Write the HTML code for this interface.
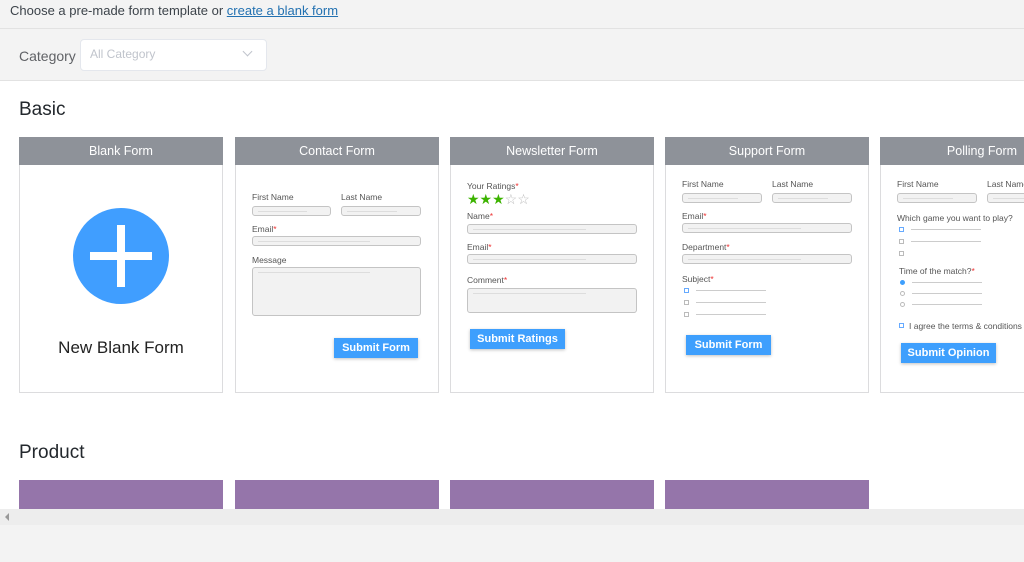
<!DOCTYPE html>
<html><head><meta charset="utf-8"><style>
*{margin:0;padding:0;box-sizing:border-box}
body{width:1024px;height:562px;overflow:hidden;background:#f3f3f3;font-family:"Liberation Sans",sans-serif;position:relative}
.a{position:absolute}
.card{position:absolute;top:137px;width:204px;height:256px;background:#fff;border:1px solid #dcdcde}
.hd{position:absolute;left:-1px;top:-1px;width:204px;height:28px;background:#8e9299;color:#fff;font-size:12.5px;text-align:center;line-height:29px}
.l{position:absolute;font-size:8.5px;color:#555;white-space:nowrap}
.l i{color:#e33;font-style:normal}
.in{position:absolute;height:10px;background:#f2f2f2;border:1px solid #c4c4c4;border-radius:3px}
.in:after{content:"";position:absolute;left:5px;right:30%;top:4px;height:1px;background:#ddd}
.btn{position:absolute;height:20px;background:#3e9ffd;color:#fff;font-weight:bold;font-size:11px;text-align:center;line-height:20px;box-shadow:0 1px 3px rgba(0,0,0,.25)}
.cb{position:absolute;width:5px;height:5px;border:1px solid #bbb}
.ln{position:absolute;height:1px;background:#ccc}
.pu{position:absolute;top:480px;width:204px;height:29px;background:#9575aa}
</style></head><body>
<div class="a" style="left:0;top:0;width:1024px;height:29px;background:#f3f3f3;border-bottom:1px solid #e2e2e2"></div>
<div class="a" style="left:10px;top:3px;font-size:13px;color:#3c434a">Choose a pre-made form template or <span style="color:#2271b1;text-decoration:underline">create a blank form</span></div>
<div class="a" style="left:0;top:80px;width:1024px;height:1px;background:#e2e2e2"></div>
<div class="a" style="left:19px;top:48px;font-size:14px;color:#606266">Category</div>
<div class="a" style="left:80px;top:39px;width:187px;height:32px;background:#fff;border:1px solid #e4e7ed;border-radius:4px"></div>
<div class="a" style="left:90px;top:47px;font-size:12px;color:#c0c4cc">All Category</div>
<div class="a" style="left:244px;top:48px;width:7px;height:7px;border-right:1px solid #c0c4cc;border-bottom:1px solid #c0c4cc;transform:rotate(45deg)"></div>
<div class="a" style="left:0;top:81px;width:1024px;height:428px;background:#fff"></div>
<div class="a" style="left:19px;top:99px;font-size:19px;color:#23282d">Basic</div>
<div class="a" style="left:19px;top:442px;font-size:19px;color:#23282d">Product</div>

<div class="card" style="left:19px"><div class="hd">Blank Form</div>
<div class="a" style="left:53px;top:70px;width:96px;height:96px;border-radius:50%;background:#409eff"></div>
<div class="a" style="left:70px;top:114px;width:62px;height:8px;background:#fff"></div>
<div class="a" style="left:97px;top:87px;width:8px;height:62px;background:#fff"></div>
<div class="a" style="left:0;width:202px;top:200px;text-align:center;font-size:17px;color:#222">New Blank Form</div>
</div>

<div class="card" style="left:235px"><div class="hd">Contact Form</div>
<div class="l" style="left:16px;top:54px">First Name</div><div class="l" style="left:105px;top:54px">Last Name</div>
<div class="in" style="left:16px;top:68px;width:79px"></div><div class="in" style="left:105px;top:68px;width:80px"></div>
<div class="l" style="left:16px;top:86px">Email<i>*</i></div>
<div class="in" style="left:16px;top:98px;width:169px"></div>
<div class="l" style="left:16px;top:117px">Message</div>
<div class="in" style="left:16px;top:129px;width:169px;height:49px"></div>
<div class="btn" style="left:98px;top:200px;width:84px">Submit Form</div>
</div>

<div class="card" style="left:450px"><div class="hd">Newsletter Form</div>
<div class="l" style="left:16px;top:43px">Your Ratings<i>*</i></div>
<div class="a" style="left:16px;top:53px;font-size:14px;color:#3cb300;letter-spacing:0px">★★★<span style="color:#bbb">☆☆</span></div>
<div class="l" style="left:16px;top:73px">Name<i>*</i></div>
<div class="in" style="left:16px;top:86px;width:170px"></div>
<div class="l" style="left:16px;top:104px">Email<i>*</i></div>
<div class="in" style="left:16px;top:116px;width:170px"></div>
<div class="l" style="left:16px;top:137px">Comment<i>*</i></div>
<div class="in" style="left:16px;top:150px;width:170px;height:25px"></div>
<div class="btn" style="left:19px;top:191px;width:95px">Submit Ratings</div>
</div>

<div class="card" style="left:665px"><div class="hd">Support Form</div>
<div class="l" style="left:16px;top:41px">First Name</div><div class="l" style="left:106px;top:41px">Last Name</div>
<div class="in" style="left:16px;top:55px;width:80px"></div><div class="in" style="left:106px;top:55px;width:80px"></div>
<div class="l" style="left:16px;top:73px">Email<i>*</i></div>
<div class="in" style="left:16px;top:85px;width:170px"></div>
<div class="l" style="left:16px;top:104px">Department<i>*</i></div>
<div class="in" style="left:16px;top:116px;width:170px"></div>
<div class="l" style="left:16px;top:136px">Subject<i>*</i></div>
<div class="cb" style="left:18px;top:150px;border-color:#6af"></div><div class="ln" style="left:30px;top:152px;width:70px"></div>
<div class="cb" style="left:18px;top:162px"></div><div class="ln" style="left:30px;top:164px;width:70px"></div>
<div class="cb" style="left:18px;top:174px"></div><div class="ln" style="left:30px;top:176px;width:70px"></div>
<div class="btn" style="left:20px;top:197px;width:85px">Submit Form</div>
</div>

<div class="card" style="left:880px;width:150px"><div class="hd" style="width:204px">Polling Form</div>
<div class="l" style="left:16px;top:41px">First Name</div><div class="l" style="left:106px;top:41px">Last Name</div>
<div class="in" style="left:16px;top:55px;width:80px"></div><div class="in" style="left:106px;top:55px;width:80px"></div>
<div class="l" style="left:16px;top:75px">Which game you want to play?</div>
<div class="cb" style="left:18px;top:89px;border-color:#6af"></div><div class="ln" style="left:30px;top:91px;width:70px"></div>
<div class="cb" style="left:18px;top:101px"></div><div class="ln" style="left:30px;top:103px;width:70px"></div>
<div class="cb" style="left:18px;top:113px"></div>
<div class="l" style="left:18px;top:128px">Time of the match?<i>*</i></div>
<div class="cb" style="left:19px;top:142px;border-radius:50%;background:#3e9ffd;border-color:#3e9ffd"></div><div class="ln" style="left:31px;top:144px;width:70px"></div>
<div class="cb" style="left:19px;top:153px;border-radius:50%"></div><div class="ln" style="left:31px;top:155px;width:70px"></div>
<div class="cb" style="left:19px;top:164px;border-radius:50%"></div><div class="ln" style="left:31px;top:166px;width:70px"></div>
<div class="cb" style="left:18px;top:185px;border-color:#6af"></div><div class="l" style="left:28px;top:183px">I agree the terms &amp; conditions</div>
<div class="btn" style="left:20px;top:205px;width:95px">Submit Opinion</div>
</div>

<div class="pu" style="left:19px"></div><div class="pu" style="left:235px"></div><div class="pu" style="left:450px"></div><div class="pu" style="left:665px"></div>
<div class="a" style="left:0;top:509px;width:1024px;height:16px;background:#ededed"></div>
<div class="a" style="left:5px;top:513px;width:0;height:0;border-top:4px solid transparent;border-bottom:4px solid transparent;border-right:4px solid #999"></div>
</body></html>
